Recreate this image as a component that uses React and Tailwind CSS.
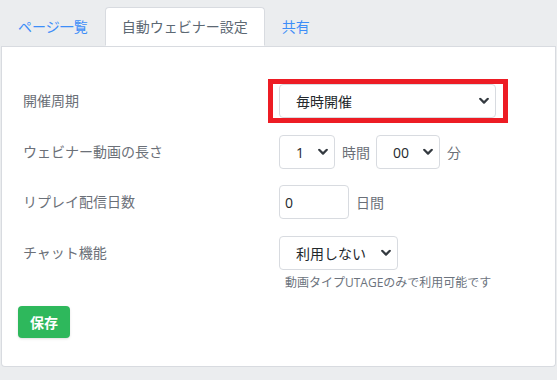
import React, { useState } from 'react';

function Chevron() {
  return (
    <svg
      className="pointer-events-none absolute right-[7px] top-1/2 -translate-y-1/2"
      width="10"
      height="7"
      viewBox="0 0 10 7"
      fill="none"
    >
      <path d="M1.2 1.3 5 5.1 8.8 1.3" stroke="#343a40" strokeWidth="2.2" strokeLinecap="round" strokeLinejoin="round" />
    </svg>
  );
}

function Select({ className, value, onChange, options }) {
  return (
    <div className={'relative ' + className}>
      <select
        value={value}
        onChange={(e) => onChange(e.target.value)}
        className="h-[34px] w-full appearance-none rounded-[4px] border border-[#d8dbe0] bg-white pl-4 pr-6 text-[14px] text-[#23282c] outline-none"
      >
        {options.map((o) => (
          <option key={o} value={o}>
            {o}
          </option>
        ))}
      </select>
      <Chevron />
    </div>
  );
}

function Row({ label, children, className = 'mb-[17px]' }) {
  return (
    <div className={'grid grid-cols-[256px_auto] items-center ' + className}>
      <div className="leading-[20px] text-[#6b7078]">{label}</div>
      <div className="flex items-center">{children}</div>
    </div>
  );
}

export default function App() {
  const [cycle, setCycle] = useState('毎時開催');
  const [hours, setHours] = useState('1');
  const [minutes, setMinutes] = useState('00');
  const [days, setDays] = useState('0');
  const [chat, setChat] = useState('利用しない');

  return (
    <div className="min-h-screen bg-[#ebedef] font-['Segoe_UI','Open_Sans','Noto_Sans_CJK_JP',sans-serif] text-[14px]">
      <div className="px-[1px]">
        <ul className="flex border-b border-[#d8dbe0] pt-[7px]">
          <li>
            <a href="#" className="block border border-transparent px-4 py-2 leading-[21px] text-[#3d8ef8]">
              ページ一覧
            </a>
          </li>
          <li className="-mb-px">
            <a
              href="#"
              className="block rounded-t-[4px] border border-[#d8dbe0] border-b-white bg-white px-4 py-2 leading-[21px] text-[#5c6873]"
            >
              自動ウェビナー設定
            </a>
          </li>
          <li>
            <a href="#" className="block border border-transparent px-4 py-2 leading-[21px] text-[#3d8ef8]">
              共有
            </a>
          </li>
        </ul>

        <div className="rounded-b-[4px] border-x border-b border-[#d8dbe0] bg-white pb-[28px] pl-[15px] pt-[37px]">
          <div className="pl-[6px]">
            <Row label="開催周期">
              <div className="relative">
                <Select
                  className="w-[217px]"
                  value={cycle}
                  onChange={setCycle}
                  options={['毎時開催', '毎日開催', '毎週開催']}
                />
                <div className="pointer-events-none absolute -bottom-[5px] -left-[11px] -right-[12px] -top-[5px] border-[5px] border-[#ed1c24]" />
              </div>
            </Row>

            <Row label="ウェビナー動画の長さ" className="mb-[16px]">
              <Select
                className="w-[56px]"
                value={hours}
                onChange={setHours}
                options={['0', '1', '2', '3', '4', '5']}
              />
              <span className="ml-[7px] mr-[6px] text-[#6b7078]">時間</span>
              <Select
                className="w-[64px]"
                value={minutes}
                onChange={setMinutes}
                options={['00', '15', '30', '45']}
              />
              <span className="ml-[7px] text-[#6b7078]">分</span>
            </Row>

            <Row label="リプレイ配信日数">
              <input
                type="text"
                value={days}
                onChange={(e) => setDays(e.target.value)}
                className="h-[34px] w-[70px] rounded-[4px] border border-[#d8dbe0] px-[5px] text-[14px] text-[#23282c] outline-none"
              />
              <span className="ml-[7px] text-[#6b7078]">日間</span>
            </Row>

            <Row label="チャット機能" className="">
              <Select
                className="w-[119px]"
                value={chat}
                onChange={setChat}
                options={['利用しない', '利用する']}
              />
            </Row>
            <div className="mt-[5px] pl-[262px] text-[12px] leading-[16px] text-[#6c737d]">
              動画タイプUTAGEのみで利用可能です
            </div>
          </div>

          <button
            type="button"
            className="mt-[15px] ml-[1px] h-[32px] w-[52px] rounded-[4px] bg-[#2eb85c] text-[14px] font-bold text-white shadow-sm"
          >
            保存
          </button>
        </div>
      </div>
    </div>
  );
}
